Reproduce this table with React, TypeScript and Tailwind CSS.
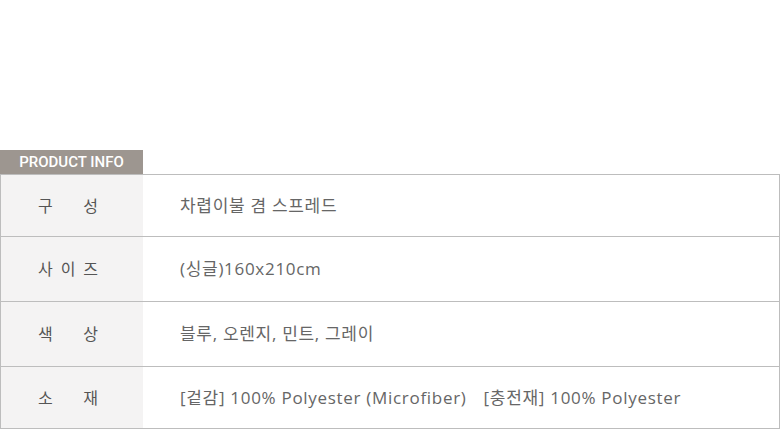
import React from "react";

const rows: { label: string[]; value: React.ReactNode; h: string }[] = [
  { label: ["구", "성"], value: "차렵이불 겸 스프레드", h: "h-[62px]" },
  { label: ["사", "이", "즈"], value: "(싱글)160x210cm", h: "h-[65px]" },
  { label: ["색", "상"], value: "블루, 오렌지, 민트, 그레이", h: "h-[65px]" },
  {
    label: ["소", "재"],
    value: (
      <>
        <span>[겉감] 100% Polyester (Microfiber)</span>
        <span className="ml-[17px]">[충전재] 100% Polyester</span>
      </>
    ),
    h: "h-[62px]",
  },
];

export default function App() {
  return (
    <div
      className="w-[780px] h-[429px] bg-white pt-[150px] overflow-hidden"
      style={{ fontFamily: '"Open Sans", "Noto Sans CJK KR", sans-serif' }}
    >
      <div
        className="w-[143px] h-[24px] bg-[#9d9690] flex items-center justify-center text-white text-[15px] leading-none pt-[1px]"
        style={{ fontFamily: '"Roboto", "Noto Sans", sans-serif', fontWeight: 500 }}
      >
        PRODUCT INFO
      </div>
      <div className="w-[780px] border-t border-l border-r border-[#bdbdbd]">
        {rows.map((r, i) => (
          <div key={i} className={`flex border-b border-[#bdbdbd] ${r.h}`}>
            <div className="w-[142px] shrink-0 bg-[#f4f3f3] flex items-center pl-[37px]">
              <div className="w-[60px] flex justify-between text-[16px] text-[#555]">
                {r.label.map((c, j) => (
                  <span key={j}>{c}</span>
                ))}
              </div>
            </div>
            <div className="flex items-center pl-[37px] text-[17px] text-[#666] tracking-[0.7px]">
              {r.value}
            </div>
          </div>
        ))}
      </div>
    </div>
  );
}
